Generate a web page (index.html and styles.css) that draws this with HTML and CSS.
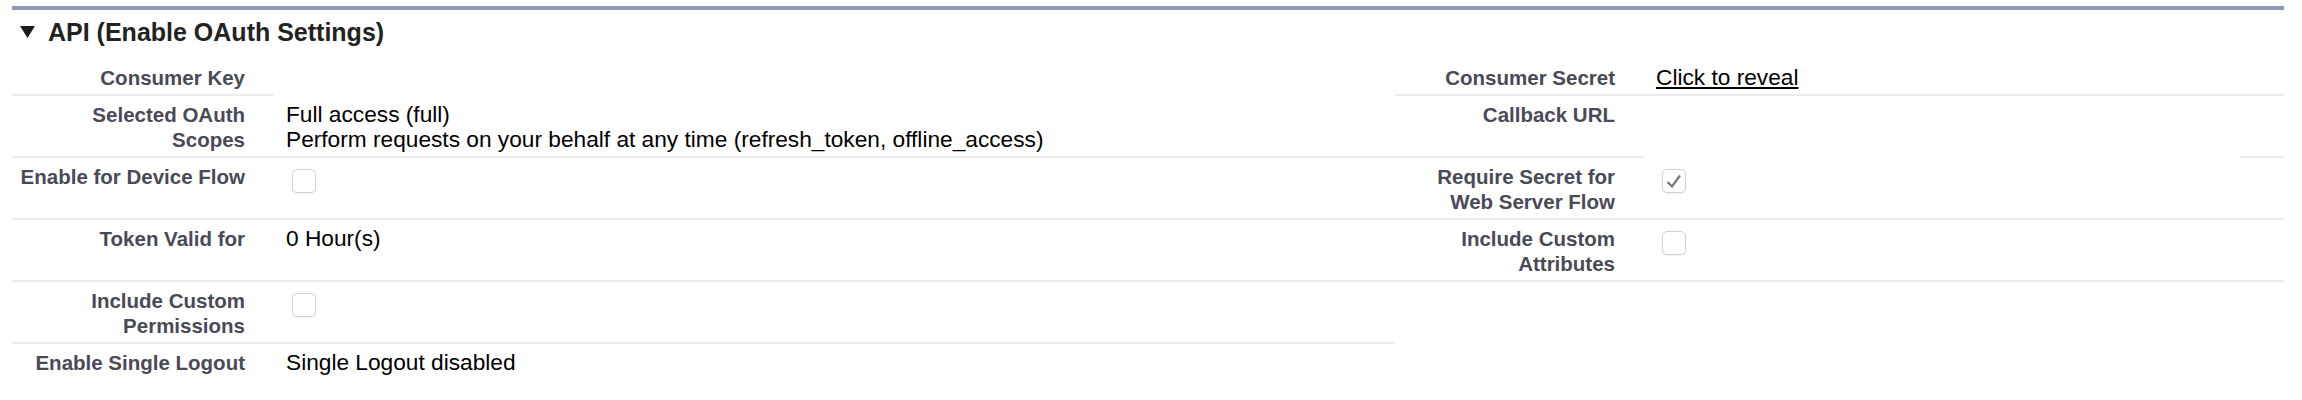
FILE: index.html
```html
<!DOCTYPE html>
<html>
<head>
<meta charset="utf-8">
<link rel="stylesheet" href="styles.css">
</head>
<body>
<div class="page">
  <section class="section">
    <h3 class="section-title">
      <svg class="twisty" width="15" height="12" viewBox="0 0 15 12"><polygon points="0,0 15,0 7.5,12" fill="#1c1c1c"/></svg>
      <span>API (Enable OAuth Settings)</span>
    </h3>
    <div class="detail">
      <div class="label">Consumer Key</div>
      <div class="data nb"></div>
      <div class="label">Consumer Secret</div>
      <div class="data"><a class="link" href="#">Click to reveal</a></div>

      <div class="label">Selected OAuth Scopes</div>
      <div class="data">Full access (full)<br>Perform requests on your behalf at any time (refresh_token, offline_access)</div>
      <div class="label label-r">Callback URL</div>
      <div class="data nb partial"></div>

      <div class="label">Enable for Device Flow</div>
      <div class="data"><span class="cb"></span></div>
      <div class="label label-r">Require Secret for Web Server Flow</div>
      <div class="data"><span class="cb"><svg width="22" height="22" viewBox="0 0 22 22"><polyline points="4.5,12 9,16.5 17,5.5" fill="none" stroke="#7a7a7a" stroke-width="2.2"/></svg></span></div>

      <div class="label">Token Valid for</div>
      <div class="data">0 Hour(s)</div>
      <div class="label label-r">Include Custom Attributes</div>
      <div class="data"><span class="cb"></span></div>

      <div class="label">Include Custom Permissions</div>
      <div class="data"><span class="cb"></span></div>
      <div class="label nb"></div>
      <div class="data nb"></div>

      <div class="label nb">Enable Single Logout</div>
      <div class="data nb">Single Logout disabled</div>
      <div class="label nb"></div>
      <div class="data nb"></div>
    </div>
  </section>
</div>
</body>
</html>
```

FILE: styles.css
```css
html, body {
  margin: 0;
  padding: 0;
  background: #ffffff;
}

.page {
  padding: 6px 18px 0 12px;
  font-family: "Liberation Sans", Arial, Helvetica, sans-serif;
}

.section {
  border-top: 4px solid #8e9cba;
}

.section-title {
  display: flex;
  align-items: center;
  gap: 13px;
  margin: 0 0 13px 0;
  padding: 8px 0 0 8px;
  font-size: 25px;
  line-height: 28px;
  font-weight: bold;
  color: #222222;
}

.twisty {
  display: block;
  flex: none;
}

.detail {
  display: grid;
  grid-template-columns: 262px 1121px 249px 640px;
}

.label,
.data {
  line-height: 25px;
  padding: 6px 0 4px 0;
  border-bottom: 2px solid #ececec;
}

.label {
  padding-left: 8px;
  padding-right: 29px;
  text-align: right;
  font-size: 20.5px;
  font-weight: bold;
  color: #4a4a56;
}

.label-r {
  padding-left: 20px;
}

.data {
  padding-left: 12px;
  font-size: 22.7px;
  color: #000000;
}

.nb {
  border-bottom-color: transparent;
}

.partial {
  background: linear-gradient(#ececec, #ececec) no-repeat right bottom / 44px 2px;
  background-origin: border-box;
  background-clip: border-box;
}

.link {
  color: #000000;
  text-decoration: underline;
}

.cb {
  display: inline-flex;
  align-items: center;
  justify-content: center;
  box-sizing: border-box;
  width: 24px;
  height: 24px;
  margin: 5px 0 0 6px;
  vertical-align: top;
  border: 1px solid #d2d2d2;
  border-radius: 5px;
  background: #ffffff;
  box-shadow: 0 1px 1px rgba(0, 0, 0, 0.06);
}

.cb svg {
  display: block;
}
```
